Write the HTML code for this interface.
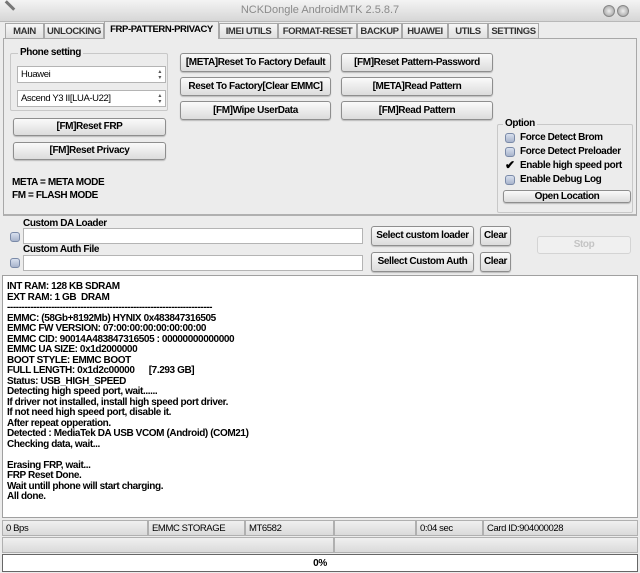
<!DOCTYPE html>
<html><head><meta charset="utf-8"><style>
*{box-sizing:border-box;margin:0;padding:0}
body{width:640px;height:573px;background:#ececec;font-family:"Liberation Sans",sans-serif;font-size:10px;font-weight:bold;letter-spacing:-0.4px;position:relative;overflow:hidden;color:#000}
.a{position:absolute}
.title{left:0;top:0;width:640px;height:22px;background:linear-gradient(#f4f4f4,#d6d6d6);border-bottom:1px solid #b8b8b8}
.title span{position:absolute;left:0;width:640px;top:4px;text-align:center;color:#8a8a8a;font-weight:normal;font-size:11px;letter-spacing:0}
.tab{top:23px;height:16px;border:1px solid #a8a8a8;border-bottom:none;background:linear-gradient(#f6f6f6,#dedede);text-align:center;line-height:15px;font-size:9.5px;color:#333}
.tab.act{top:21px;height:18px;background:#ececec;color:#000;z-index:2}
.panel{left:3px;top:38px;width:634px;height:178px;border:1px solid #a8a8a8;border-bottom:2px solid #b0b0b0}
.btn{border:1px solid #8e8e8e;border-radius:3px;background:linear-gradient(#fafafa,#dcdcdc);text-align:center;box-shadow:0 1px 1px #bbb}
.grp{border:1px solid #c8c8c8;border-radius:2px}
.lbl{background:#ececec;padding:0 2px}
.combo{background:#fff;border:1px solid #b4b4b4;font-weight:normal;font-size:9.5px;padding-left:3px;line-height:15px}
.combo:after{content:"▴\A▾";white-space:pre;position:absolute;right:4px;top:0;font-size:6px;line-height:6px;color:#555;padding-top:2px}
.cb{width:10px;height:10px;border:1px solid #7a8aa8;border-radius:3px;background:linear-gradient(#d8e0ee,#a8b4cc)}
.inp{background:#fff;border:1px solid #b4b4b4}
.log{left:2px;top:275px;width:636px;height:243px;background:#fff;border:1px solid #a0a0a0;padding:6px 0 0 4px;line-height:10.5px;white-space:pre}
.sb{height:16px;border:1px solid #b0b0b0;background:linear-gradient(#f0f0f0,#dadada);font-weight:normal;padding-left:3px;line-height:15px;font-size:9.5px}
</style></head><body>
<div class="a title"><span>NCKDongle AndroidMTK 2.5.8.7</span></div>
<div class="a" style="left:4px;top:4px;width:12px;height:3px;background:#777;transform:rotate(45deg)"></div>
<div class="a" style="left:603px;top:5px;width:12px;height:12px;border-radius:50%;background:radial-gradient(#eee,#999);border:1px solid #888"></div>
<div class="a" style="left:617px;top:5px;width:12px;height:12px;border-radius:50%;background:radial-gradient(#eee,#999);border:1px solid #888"></div>
<div class="a tab" style="left:5px;width:39px">MAIN</div>
<div class="a tab" style="left:44px;width:60px">UNLOCKING</div>
<div class="a tab act" style="left:104px;width:115px">FRP-PATTERN-PRIVACY</div>
<div class="a tab" style="left:219px;width:59px">IMEI UTILS</div>
<div class="a tab" style="left:278px;width:79px">FORMAT-RESET</div>
<div class="a tab" style="left:357px;width:45px">BACKUP</div>
<div class="a tab" style="left:402px;width:46px">HUAWEI</div>
<div class="a tab" style="left:448px;width:40px">UTILS</div>
<div class="a tab" style="left:488px;width:51px">SETTINGS</div>
<div class="a panel"></div>
<div class="a grp" style="left:10px;top:53px;width:158px;height:58px"></div>
<div class="a lbl" style="left:18px;top:47px">Phone setting</div>
<div class="a combo" style="left:17px;top:66px;width:149px;height:17px">Huawei</div>
<div class="a combo" style="left:17px;top:90px;width:149px;height:17px">Ascend Y3 II[LUA-U22]</div>
<div class="a btn" style="left:13px;top:118px;width:153px;height:18px;line-height:16px">[FM]Reset FRP</div>
<div class="a btn" style="left:13px;top:142px;width:153px;height:18px;line-height:16px">[FM]Reset Privacy</div>
<div class="a" style="left:12px;top:177px">META = META MODE</div>
<div class="a" style="left:12px;top:190px">FM = FLASH MODE</div>
<div class="a btn" style="left:180px;top:53px;width:151px;height:19px;line-height:17px">[META]Reset To Factory Default</div>
<div class="a btn" style="left:180px;top:77px;width:151px;height:19px;line-height:17px">Reset To Factory[Clear EMMC]</div>
<div class="a btn" style="left:180px;top:101px;width:151px;height:19px;line-height:17px">[FM]Wipe UserData</div>
<div class="a btn" style="left:341px;top:53px;width:152px;height:19px;line-height:17px">[FM]Reset Pattern-Password</div>
<div class="a btn" style="left:341px;top:77px;width:152px;height:19px;line-height:17px">[META]Read Pattern</div>
<div class="a btn" style="left:341px;top:101px;width:152px;height:19px;line-height:17px">[FM]Read Pattern</div>
<div class="a grp" style="left:497px;top:124px;width:136px;height:89px"></div>
<div class="a lbl" style="left:503px;top:118px">Option</div>
<div class="a cb" style="left:505px;top:133px"></div><div class="a" style="left:520px;top:132px">Force Detect Brom</div>
<div class="a cb" style="left:505px;top:147px"></div><div class="a" style="left:520px;top:146px">Force Detect Preloader</div>
<div class="a" style="left:505px;top:158px;font-size:12px">✔</div><div class="a" style="left:520px;top:160px">Enable high speed port</div>
<div class="a cb" style="left:505px;top:175px"></div><div class="a" style="left:520px;top:174px">Enable Debug Log</div>
<div class="a btn" style="left:503px;top:190px;width:128px;height:13px;line-height:11px">Open Location</div>
<div class="a" style="left:23px;top:218px">Custom DA Loader</div>
<div class="a cb" style="left:10px;top:232px"></div>
<div class="a inp" style="left:23px;top:228px;width:340px;height:16px"></div>
<div class="a btn" style="left:371px;top:226px;width:103px;height:20px;line-height:18px">Select custom loader</div>
<div class="a btn" style="left:480px;top:226px;width:31px;height:20px;line-height:18px">Clear</div>
<div class="a" style="left:23px;top:244px">Custom Auth File</div>
<div class="a cb" style="left:10px;top:258px"></div>
<div class="a inp" style="left:23px;top:255px;width:340px;height:16px"></div>
<div class="a btn" style="left:371px;top:252px;width:103px;height:20px;line-height:18px">Sellect Custom Auth</div>
<div class="a btn" style="left:480px;top:252px;width:31px;height:20px;line-height:18px">Clear</div>
<div class="a" style="left:537px;top:236px;width:94px;height:18px;border:1px solid #d4d4d4;border-radius:3px;background:#f0f0f0;color:#c4c4c4;text-align:center;line-height:16px">Stop</div>
<div class="a log">INT RAM: 128 KB SDRAM
EXT RAM: 1 GB  DRAM
----------------------------------------------------------------------
EMMC: (58Gb+8192Mb) HYNIX 0x483847316505
EMMC FW VERSION: 07:00:00:00:00:00:00:00
EMMC CID: 90014A483847316505 : 00000000000000
EMMC UA SIZE: 0x1d2000000
BOOT STYLE: EMMC BOOT
FULL LENGTH: 0x1d2c00000      [7.293 GB]
Status: USB_HIGH_SPEED
Detecting high speed port, wait......
If driver not installed, install high speed port driver.
If not need high speed port, disable it.
After repeat opperation.
Detected : MediaTek DA USB VCOM (Android) (COM21)
Checking data, wait...

Erasing FRP, wait...
FRP Reset Done.
Wait untill phone will start charging.
All done.</div>
<div class="a sb" style="left:2px;top:520px;width:146px">0 Bps</div>
<div class="a sb" style="left:148px;top:520px;width:97px">EMMC STORAGE</div>
<div class="a sb" style="left:245px;top:520px;width:89px">MT6582</div>
<div class="a sb" style="left:334px;top:520px;width:82px"></div>
<div class="a sb" style="left:416px;top:520px;width:67px">0:04 sec</div>
<div class="a sb" style="left:483px;top:520px;width:155px">Card ID:904000028</div>
<div class="a sb" style="left:2px;top:537px;width:332px"></div>
<div class="a sb" style="left:334px;top:537px;width:304px"></div>
<div class="a" style="left:2px;top:554px;width:636px;height:18px;background:#fff;border:1px solid #666;text-align:center;line-height:17px">0%</div>
</body></html>
